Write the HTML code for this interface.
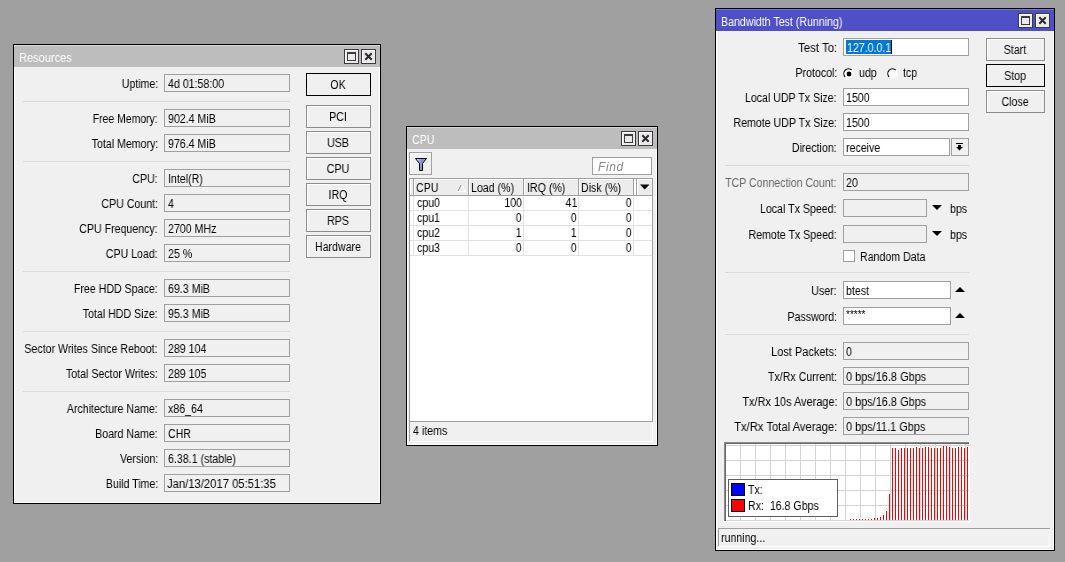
<!DOCTYPE html>
<html><head><meta charset="utf-8"><style>
html,body{margin:0;padding:0}
body{width:1065px;height:562px;overflow:hidden;position:relative;background:#a0a0a0;font-family:"Liberation Sans", sans-serif;font-size:12px}
body div, body svg{position:absolute}
.t{white-space:nowrap;line-height:14px;will-change:transform}
.tc{text-align:center}
</style></head><body>
<div style="left:13px;top:44px;width:368px;height:460px;background:#000"></div>
<div style="left:14px;top:45px;width:366px;height:458px;background:#f0f0f0"></div>
<div style="left:14px;top:45px;width:366px;height:22px;background:#bdbdbd"></div>
<div style="left:14px;top:45px;width:366px;height:1px;background:#d8d8d8"></div>
<div style="left:14px;top:67px;width:1px;height:436px;background:#fff"></div>
<div style="left:379px;top:67px;width:1px;height:436px;background:#fff"></div>
<div style="left:14px;top:502px;width:366px;height:1px;background:#fff"></div>
<div class="t" style="left:19px;top:51px;color:#fff;font-size:12px;transform:scaleX(0.92);transform-origin:0 0;">Resources</div>
<div style="left:344px;top:49px;width:15px;height:15px;background:#3c3c3c"></div>
<div style="left:345px;top:50px;width:13px;height:13px;background:#fff"></div>
<div style="left:346px;top:51px;width:12px;height:12px;background:#ece9ec"></div>
<div style="left:347px;top:52px;width:9px;height:9px;background:#3c3c3c"></div>
<div style="left:348px;top:54px;width:7px;height:6px;background:#ece9ec"></div>
<div style="left:361px;top:49px;width:15px;height:15px;background:#3c3c3c"></div>
<div style="left:362px;top:50px;width:13px;height:13px;background:#fff"></div>
<div style="left:363px;top:51px;width:12px;height:12px;background:#ece9ec"></div>
<svg style="left:361px;top:49px" width="15" height="15"><path d="M5 5L10 10M10 5L5 10" stroke="#2a2a2a" stroke-width="2" stroke-linecap="square"/></svg>
<div class="t" style="right:907px;top:77px;color:#000;font-size:12px;transform:scaleX(0.885);transform-origin:100% 0;">Uptime:</div>
<div style="left:164px;top:74px;width:126px;height:18px;background:#a0a0a0"></div>
<div style="left:165px;top:75px;width:124px;height:16px;background:#f0f0f0"></div>
<div class="t" style="left:168px;top:77px;color:#000;font-size:12px;transform:scaleX(0.885);transform-origin:0 0;">4d 01:58:00</div>
<div style="left:23px;top:101px;width:267px;height:1px;background:#dcdcdc"></div>
<div class="t" style="right:907px;top:112px;color:#000;font-size:12px;transform:scaleX(0.87);transform-origin:100% 0;">Free Memory:</div>
<div style="left:164px;top:109px;width:126px;height:18px;background:#a0a0a0"></div>
<div style="left:165px;top:110px;width:124px;height:16px;background:#f0f0f0"></div>
<div class="t" style="left:168px;top:112px;color:#000;font-size:12px;transform:scaleX(0.885);transform-origin:0 0;">902.4 MiB</div>
<div class="t" style="right:907px;top:137px;color:#000;font-size:12px;transform:scaleX(0.885);transform-origin:100% 0;">Total Memory:</div>
<div style="left:164px;top:134px;width:126px;height:18px;background:#a0a0a0"></div>
<div style="left:165px;top:135px;width:124px;height:16px;background:#f0f0f0"></div>
<div class="t" style="left:168px;top:137px;color:#000;font-size:12px;transform:scaleX(0.885);transform-origin:0 0;">976.4 MiB</div>
<div style="left:23px;top:161px;width:267px;height:1px;background:#dcdcdc"></div>
<div class="t" style="right:907px;top:172px;color:#000;font-size:12px;transform:scaleX(0.885);transform-origin:100% 0;">CPU:</div>
<div style="left:164px;top:169px;width:126px;height:18px;background:#a0a0a0"></div>
<div style="left:165px;top:170px;width:124px;height:16px;background:#f0f0f0"></div>
<div class="t" style="left:168px;top:172px;color:#000;font-size:12px;transform:scaleX(0.885);transform-origin:0 0;">Intel(R)</div>
<div class="t" style="right:907px;top:197px;color:#000;font-size:12px;transform:scaleX(0.885);transform-origin:100% 0;">CPU Count:</div>
<div style="left:164px;top:194px;width:126px;height:18px;background:#a0a0a0"></div>
<div style="left:165px;top:195px;width:124px;height:16px;background:#f0f0f0"></div>
<div class="t" style="left:168px;top:197px;color:#000;font-size:12px;transform:scaleX(0.885);transform-origin:0 0;">4</div>
<div class="t" style="right:907px;top:222px;color:#000;font-size:12px;transform:scaleX(0.885);transform-origin:100% 0;">CPU Frequency:</div>
<div style="left:164px;top:219px;width:126px;height:18px;background:#a0a0a0"></div>
<div style="left:165px;top:220px;width:124px;height:16px;background:#f0f0f0"></div>
<div class="t" style="left:168px;top:222px;color:#000;font-size:12px;transform:scaleX(0.885);transform-origin:0 0;">2700 MHz</div>
<div class="t" style="right:907px;top:247px;color:#000;font-size:12px;transform:scaleX(0.885);transform-origin:100% 0;">CPU Load:</div>
<div style="left:164px;top:244px;width:126px;height:18px;background:#a0a0a0"></div>
<div style="left:165px;top:245px;width:124px;height:16px;background:#f0f0f0"></div>
<div class="t" style="left:168px;top:247px;color:#000;font-size:12px;transform:scaleX(0.885);transform-origin:0 0;">25 %</div>
<div style="left:23px;top:271px;width:267px;height:1px;background:#dcdcdc"></div>
<div class="t" style="right:907px;top:282px;color:#000;font-size:12px;transform:scaleX(0.885);transform-origin:100% 0;">Free HDD Space:</div>
<div style="left:164px;top:279px;width:126px;height:18px;background:#a0a0a0"></div>
<div style="left:165px;top:280px;width:124px;height:16px;background:#f0f0f0"></div>
<div class="t" style="left:168px;top:282px;color:#000;font-size:12px;transform:scaleX(0.885);transform-origin:0 0;">69.3 MiB</div>
<div class="t" style="right:907px;top:307px;color:#000;font-size:12px;transform:scaleX(0.885);transform-origin:100% 0;">Total HDD Size:</div>
<div style="left:164px;top:304px;width:126px;height:18px;background:#a0a0a0"></div>
<div style="left:165px;top:305px;width:124px;height:16px;background:#f0f0f0"></div>
<div class="t" style="left:168px;top:307px;color:#000;font-size:12px;transform:scaleX(0.885);transform-origin:0 0;">95.3 MiB</div>
<div style="left:23px;top:331px;width:267px;height:1px;background:#dcdcdc"></div>
<div class="t" style="right:907px;top:342px;color:#000;font-size:12px;transform:scaleX(0.885);transform-origin:100% 0;">Sector Writes Since Reboot:</div>
<div style="left:164px;top:339px;width:126px;height:18px;background:#a0a0a0"></div>
<div style="left:165px;top:340px;width:124px;height:16px;background:#f0f0f0"></div>
<div class="t" style="left:168px;top:342px;color:#000;font-size:12px;transform:scaleX(0.885);transform-origin:0 0;">289 104</div>
<div class="t" style="right:907px;top:367px;color:#000;font-size:12px;transform:scaleX(0.885);transform-origin:100% 0;">Total Sector Writes:</div>
<div style="left:164px;top:364px;width:126px;height:18px;background:#a0a0a0"></div>
<div style="left:165px;top:365px;width:124px;height:16px;background:#f0f0f0"></div>
<div class="t" style="left:168px;top:367px;color:#000;font-size:12px;transform:scaleX(0.885);transform-origin:0 0;">289 105</div>
<div style="left:23px;top:391px;width:267px;height:1px;background:#dcdcdc"></div>
<div class="t" style="right:907px;top:402px;color:#000;font-size:12px;transform:scaleX(0.885);transform-origin:100% 0;">Architecture Name:</div>
<div style="left:164px;top:399px;width:126px;height:18px;background:#a0a0a0"></div>
<div style="left:165px;top:400px;width:124px;height:16px;background:#f0f0f0"></div>
<div class="t" style="left:168px;top:402px;color:#000;font-size:12px;transform:scaleX(0.885);transform-origin:0 0;">x86_64</div>
<div class="t" style="right:907px;top:427px;color:#000;font-size:12px;transform:scaleX(0.885);transform-origin:100% 0;">Board Name:</div>
<div style="left:164px;top:424px;width:126px;height:18px;background:#a0a0a0"></div>
<div style="left:165px;top:425px;width:124px;height:16px;background:#f0f0f0"></div>
<div class="t" style="left:168px;top:427px;color:#000;font-size:12px;transform:scaleX(0.885);transform-origin:0 0;">CHR</div>
<div class="t" style="right:907px;top:452px;color:#000;font-size:12px;transform:scaleX(0.885);transform-origin:100% 0;">Version:</div>
<div style="left:164px;top:449px;width:126px;height:18px;background:#a0a0a0"></div>
<div style="left:165px;top:450px;width:124px;height:16px;background:#f0f0f0"></div>
<div class="t" style="left:168px;top:452px;color:#000;font-size:12px;transform:scaleX(0.885);transform-origin:0 0;">6.38.1 (stable)</div>
<div class="t" style="right:907px;top:477px;color:#000;font-size:12px;transform:scaleX(0.885);transform-origin:100% 0;">Build Time:</div>
<div style="left:164px;top:474px;width:126px;height:18px;background:#a0a0a0"></div>
<div style="left:165px;top:475px;width:124px;height:16px;background:#f0f0f0"></div>
<div class="t" style="left:167px;top:477px;color:#000;font-size:12px;transform:scaleX(0.937);transform-origin:0 0;">Jan/13/2017 05:51:35</div>
<div style="left:306px;top:73px;width:65px;height:23px;background:#000"></div>
<div style="left:307px;top:74px;width:63px;height:21px;background:#f0f0f0"></div>
<div class="t tc" style="left:238px;width:200px;top:78px;color:#000;font-size:12px;transform:scaleX(0.885);transform-origin:50% 0;">OK</div>
<div style="left:306px;top:105px;width:65px;height:23px;background:#8c8c8c"></div>
<div style="left:307px;top:106px;width:63px;height:21px;background:#fff"></div>
<div style="left:308px;top:107px;width:62px;height:20px;background:#f0f0f0"></div>
<div class="t tc" style="left:238px;width:200px;top:110px;color:#000;font-size:12px;transform:scaleX(0.885);transform-origin:50% 0;">PCI</div>
<div style="left:306px;top:131px;width:65px;height:23px;background:#8c8c8c"></div>
<div style="left:307px;top:132px;width:63px;height:21px;background:#fff"></div>
<div style="left:308px;top:133px;width:62px;height:20px;background:#f0f0f0"></div>
<div class="t tc" style="left:238px;width:200px;top:136px;color:#000;font-size:12px;transform:scaleX(0.885);transform-origin:50% 0;">USB</div>
<div style="left:306px;top:157px;width:65px;height:23px;background:#8c8c8c"></div>
<div style="left:307px;top:158px;width:63px;height:21px;background:#fff"></div>
<div style="left:308px;top:159px;width:62px;height:20px;background:#f0f0f0"></div>
<div class="t tc" style="left:238px;width:200px;top:162px;color:#000;font-size:12px;transform:scaleX(0.885);transform-origin:50% 0;">CPU</div>
<div style="left:306px;top:183px;width:65px;height:23px;background:#8c8c8c"></div>
<div style="left:307px;top:184px;width:63px;height:21px;background:#fff"></div>
<div style="left:308px;top:185px;width:62px;height:20px;background:#f0f0f0"></div>
<div class="t tc" style="left:238px;width:200px;top:188px;color:#000;font-size:12px;transform:scaleX(0.885);transform-origin:50% 0;">IRQ</div>
<div style="left:306px;top:209px;width:65px;height:23px;background:#8c8c8c"></div>
<div style="left:307px;top:210px;width:63px;height:21px;background:#fff"></div>
<div style="left:308px;top:211px;width:62px;height:20px;background:#f0f0f0"></div>
<div class="t tc" style="left:238px;width:200px;top:214px;color:#000;font-size:12px;transform:scaleX(0.885);transform-origin:50% 0;">RPS</div>
<div style="left:306px;top:235px;width:65px;height:23px;background:#8c8c8c"></div>
<div style="left:307px;top:236px;width:63px;height:21px;background:#fff"></div>
<div style="left:308px;top:237px;width:62px;height:20px;background:#f0f0f0"></div>
<div class="t tc" style="left:238px;width:200px;top:240px;color:#000;font-size:12px;transform:scaleX(0.885);transform-origin:50% 0;">Hardware</div>
<div style="left:406px;top:126px;width:252px;height:320px;background:#000"></div>
<div style="left:407px;top:127px;width:250px;height:318px;background:#f0f0f0"></div>
<div style="left:407px;top:127px;width:250px;height:22px;background:#bdbdbd"></div>
<div style="left:407px;top:127px;width:250px;height:1px;background:#d8d8d8"></div>
<div style="left:407px;top:149px;width:1px;height:296px;background:#fff"></div>
<div style="left:656px;top:149px;width:1px;height:296px;background:#fff"></div>
<div style="left:407px;top:444px;width:250px;height:1px;background:#fff"></div>
<div class="t" style="left:412px;top:133px;color:#fff;font-size:12px;transform:scaleX(0.885);transform-origin:0 0;">CPU</div>
<div style="left:621px;top:131px;width:15px;height:15px;background:#3c3c3c"></div>
<div style="left:622px;top:132px;width:13px;height:13px;background:#fff"></div>
<div style="left:623px;top:133px;width:12px;height:12px;background:#ece9ec"></div>
<div style="left:624px;top:134px;width:9px;height:9px;background:#3c3c3c"></div>
<div style="left:625px;top:136px;width:7px;height:6px;background:#ece9ec"></div>
<div style="left:638px;top:131px;width:15px;height:15px;background:#3c3c3c"></div>
<div style="left:639px;top:132px;width:13px;height:13px;background:#fff"></div>
<div style="left:640px;top:133px;width:12px;height:12px;background:#ece9ec"></div>
<svg style="left:638px;top:131px" width="15" height="15"><path d="M5 5L10 10M10 5L5 10" stroke="#2a2a2a" stroke-width="2" stroke-linecap="square"/></svg>
<div style="left:409px;top:152px;width:23px;height:23px;background:#a0a0a0"></div>
<div style="left:410px;top:153px;width:21px;height:21px;background:#fff"></div>
<div style="left:411px;top:154px;width:20px;height:20px;background:#f0f0f0"></div>
<svg style="left:409px;top:152px" width="23" height="23"><defs><linearGradient id="fg" x1="0" x2="1"><stop offset="0" stop-color="#e4e8fa"/><stop offset="0.55" stop-color="#7d8cd4"/><stop offset="1" stop-color="#a9b4e6"/></linearGradient></defs><path d="M6.5 6.5H17.5L13.5 11.5V18.5H10.5V11.5Z" fill="url(#fg)" stroke="#000" stroke-width="1" stroke-linejoin="miter"/></svg>
<div style="left:592px;top:157px;width:60px;height:18px;background:#a0a0a0"></div>
<div style="left:593px;top:158px;width:58px;height:16px;background:#fff"></div>
<div class="t" style="left:598px;top:160px;color:#8a8a8a;font-size:12px;transform:scaleX(1.0);transform-origin:0 0;font-style:italic;letter-spacing:0.6px">Find</div>
<div style="left:409px;top:178px;width:244px;height:244px;background:#a0a0a0"></div>
<div style="left:410px;top:179px;width:242px;height:242px;background:#fff"></div>
<div style="left:410px;top:180px;width:242px;height:15px;background:#ececec"></div>
<div style="left:410px;top:195px;width:242px;height:1px;background:#a0a0a0"></div>
<div style="left:413px;top:179px;width:1px;height:16px;background:#a0a0a0"></div>
<div style="left:414px;top:179px;width:1px;height:16px;background:#fff"></div>
<div style="left:468px;top:179px;width:1px;height:16px;background:#a0a0a0"></div>
<div style="left:469px;top:179px;width:1px;height:16px;background:#fff"></div>
<div style="left:523px;top:179px;width:1px;height:16px;background:#a0a0a0"></div>
<div style="left:524px;top:179px;width:1px;height:16px;background:#fff"></div>
<div style="left:578px;top:179px;width:1px;height:16px;background:#a0a0a0"></div>
<div style="left:579px;top:179px;width:1px;height:16px;background:#fff"></div>
<div style="left:633px;top:179px;width:1px;height:16px;background:#a0a0a0"></div>
<div style="left:634px;top:179px;width:1px;height:16px;background:#fff"></div>
<div style="left:636px;top:179px;width:1px;height:16px;background:#a0a0a0"></div>
<div style="left:637px;top:179px;width:1px;height:16px;background:#fff"></div>
<div style="left:410px;top:179px;width:1px;height:16px;background:#fff"></div>
<div style="left:634px;top:179px;width:2px;height:16px;background:#fff"></div>
<div class="t" style="left:416px;top:181px;color:#000;font-size:12px;transform:scaleX(0.885);transform-origin:0 0;">CPU</div>
<div class="t" style="left:471px;top:181px;color:#000;font-size:12px;transform:scaleX(0.885);transform-origin:0 0;">Load (%)</div>
<div class="t" style="left:527px;top:181px;color:#000;font-size:12px;transform:scaleX(0.885);transform-origin:0 0;">IRQ (%)</div>
<div class="t" style="left:581px;top:181px;color:#000;font-size:12px;transform:scaleX(0.885);transform-origin:0 0;">Disk (%)</div>
<svg style="left:457px;top:184px" width="10" height="8"><path d="M4.5 0.5L1 7" stroke="#8a8a8a" fill="none"/><path d="M4.5 0.5L8.5 7.5H1" stroke="#fff" fill="none"/></svg>
<svg style="left:637px;top:183px" width="16" height="10"><path d="M3 1.5H12.5L7.75 6.5Z" fill="#000"/></svg>
<div style="left:410px;top:210px;width:242px;height:1px;background:#e2e2e2"></div>
<div class="t" style="left:417px;top:196px;color:#000;font-size:12px;transform:scaleX(0.885);transform-origin:0 0;">cpu0</div>
<div class="t" style="right:543px;top:196px;color:#000;font-size:12px;transform:scaleX(0.885);transform-origin:100% 0;">100</div>
<div class="t" style="right:488px;top:196px;color:#000;font-size:12px;transform:scaleX(0.885);transform-origin:100% 0;">41</div>
<div class="t" style="right:433px;top:196px;color:#000;font-size:12px;transform:scaleX(0.885);transform-origin:100% 0;">0</div>
<div style="left:410px;top:225px;width:242px;height:1px;background:#e2e2e2"></div>
<div class="t" style="left:417px;top:211px;color:#000;font-size:12px;transform:scaleX(0.885);transform-origin:0 0;">cpu1</div>
<div class="t" style="right:543px;top:211px;color:#000;font-size:12px;transform:scaleX(0.885);transform-origin:100% 0;">0</div>
<div class="t" style="right:488px;top:211px;color:#000;font-size:12px;transform:scaleX(0.885);transform-origin:100% 0;">0</div>
<div class="t" style="right:433px;top:211px;color:#000;font-size:12px;transform:scaleX(0.885);transform-origin:100% 0;">0</div>
<div style="left:410px;top:240px;width:242px;height:1px;background:#e2e2e2"></div>
<div class="t" style="left:417px;top:226px;color:#000;font-size:12px;transform:scaleX(0.885);transform-origin:0 0;">cpu2</div>
<div class="t" style="right:543px;top:226px;color:#000;font-size:12px;transform:scaleX(0.885);transform-origin:100% 0;">1</div>
<div class="t" style="right:488px;top:226px;color:#000;font-size:12px;transform:scaleX(0.885);transform-origin:100% 0;">1</div>
<div class="t" style="right:433px;top:226px;color:#000;font-size:12px;transform:scaleX(0.885);transform-origin:100% 0;">0</div>
<div style="left:410px;top:255px;width:242px;height:1px;background:#e2e2e2"></div>
<div class="t" style="left:417px;top:241px;color:#000;font-size:12px;transform:scaleX(0.885);transform-origin:0 0;">cpu3</div>
<div class="t" style="right:543px;top:241px;color:#000;font-size:12px;transform:scaleX(0.885);transform-origin:100% 0;">0</div>
<div class="t" style="right:488px;top:241px;color:#000;font-size:12px;transform:scaleX(0.885);transform-origin:100% 0;">0</div>
<div class="t" style="right:433px;top:241px;color:#000;font-size:12px;transform:scaleX(0.885);transform-origin:100% 0;">0</div>
<div style="left:413px;top:196px;width:1px;height:60px;background:#e2e2e2"></div>
<div style="left:468px;top:196px;width:1px;height:60px;background:#e2e2e2"></div>
<div style="left:523px;top:196px;width:1px;height:60px;background:#e2e2e2"></div>
<div style="left:578px;top:196px;width:1px;height:60px;background:#e2e2e2"></div>
<div style="left:633px;top:196px;width:1px;height:60px;background:#e2e2e2"></div>
<div style="left:409px;top:422px;width:1px;height:19px;background:#a0a0a0"></div>
<div style="left:409px;top:441px;width:244px;height:1px;background:#fff"></div>
<div style="left:652px;top:422px;width:1px;height:19px;background:#fff"></div>
<div class="t" style="left:413px;top:424px;color:#000;font-size:12px;transform:scaleX(0.885);transform-origin:0 0;">4 items</div>
<div style="left:715px;top:8px;width:340px;height:543px;background:#000"></div>
<div style="left:716px;top:9px;width:338px;height:541px;background:#f0f0f0"></div>
<div style="left:716px;top:9px;width:338px;height:22px;background:#4f4fc8"></div>
<div style="left:716px;top:9px;width:338px;height:1px;background:#7a7ad8"></div>
<div style="left:716px;top:31px;width:1px;height:519px;background:#fff"></div>
<div style="left:1053px;top:31px;width:1px;height:519px;background:#fff"></div>
<div style="left:716px;top:549px;width:338px;height:1px;background:#fff"></div>
<div class="t" style="left:721px;top:15px;color:#fff;font-size:12px;transform:scaleX(0.885);transform-origin:0 0;">Bandwidth Test (Running)</div>
<div style="left:1018px;top:13px;width:15px;height:15px;background:#3c3c3c"></div>
<div style="left:1019px;top:14px;width:13px;height:13px;background:#fff"></div>
<div style="left:1020px;top:15px;width:12px;height:12px;background:#ece9ec"></div>
<div style="left:1021px;top:16px;width:9px;height:9px;background:#3c3c3c"></div>
<div style="left:1022px;top:18px;width:7px;height:6px;background:#ece9ec"></div>
<div style="left:1035px;top:13px;width:15px;height:15px;background:#3c3c3c"></div>
<div style="left:1036px;top:14px;width:13px;height:13px;background:#fff"></div>
<div style="left:1037px;top:15px;width:12px;height:12px;background:#ece9ec"></div>
<svg style="left:1035px;top:13px" width="15" height="15"><path d="M5 5L10 10M10 5L5 10" stroke="#2a2a2a" stroke-width="2" stroke-linecap="square"/></svg>
<div class="t" style="right:228px;top:41px;color:#000;font-size:12px;transform:scaleX(0.95);transform-origin:100% 0;">Test To:</div>
<div style="left:843px;top:38px;width:126px;height:18px;background:#a0a0a0"></div>
<div style="left:844px;top:39px;width:124px;height:16px;background:#fff"></div>
<div style="left:846px;top:40px;width:46px;height:14px;background:#0078d7"></div>
<div class="t" style="left:847px;top:41px;color:#fff;font-size:12px;transform:scaleX(0.885);transform-origin:0 0;">127.0.0.1</div>
<div style="left:891px;top:40px;width:1px;height:14px;background:#000"></div>
<div class="t" style="right:228px;top:66px;color:#000;font-size:12px;transform:scaleX(0.885);transform-origin:100% 0;">Protocol:</div>
<svg style="left:843px;top:67px" width="13" height="13"><circle cx="5.5" cy="6.5" r="4.6" fill="#fff"/><path d="M8.8 3.2A4.6 4.6 0 0 0 2.2 9.8" fill="none" stroke="#000" stroke-width="1.1"/><path d="M8.8 3.2A4.6 4.6 0 0 1 2.2 9.8" fill="none" stroke="#fff" stroke-width="1.1"/></svg>
<div class="t" style="left:859px;top:66px;color:#000;font-size:12px;transform:scaleX(0.885);transform-origin:0 0;">udp</div>
<svg style="left:887px;top:67px" width="13" height="13"><circle cx="5.5" cy="6.5" r="4.6" fill="#fff"/><path d="M8.8 3.2A4.6 4.6 0 0 0 2.2 9.8" fill="none" stroke="#000" stroke-width="1.1"/><path d="M8.8 3.2A4.6 4.6 0 0 1 2.2 9.8" fill="none" stroke="#fff" stroke-width="1.1"/></svg>
<div class="t" style="left:903px;top:66px;color:#000;font-size:12px;transform:scaleX(0.885);transform-origin:0 0;">tcp</div>
<div style="left:847px;top:72px;width:4px;height:4px;border-radius:50%;background:#000;box-shadow:0 0 0 0.4px #000"></div>
<div class="t" style="right:228px;top:91px;color:#000;font-size:12px;transform:scaleX(0.885);transform-origin:100% 0;">Local UDP Tx Size:</div>
<div style="left:843px;top:88px;width:126px;height:18px;background:#a0a0a0"></div>
<div style="left:844px;top:89px;width:124px;height:16px;background:#fff"></div>
<div class="t" style="left:846px;top:91px;color:#000;font-size:12px;transform:scaleX(0.885);transform-origin:0 0;">1500</div>
<div class="t" style="right:228px;top:116px;color:#000;font-size:12px;transform:scaleX(0.885);transform-origin:100% 0;">Remote UDP Tx Size:</div>
<div style="left:843px;top:113px;width:126px;height:18px;background:#a0a0a0"></div>
<div style="left:844px;top:114px;width:124px;height:16px;background:#fff"></div>
<div class="t" style="left:846px;top:116px;color:#000;font-size:12px;transform:scaleX(0.885);transform-origin:0 0;">1500</div>
<div class="t" style="right:228px;top:141px;color:#000;font-size:12px;transform:scaleX(0.885);transform-origin:100% 0;">Direction:</div>
<div style="left:843px;top:138px;width:107px;height:18px;background:#a0a0a0"></div>
<div style="left:844px;top:139px;width:105px;height:16px;background:#fff"></div>
<div class="t" style="left:846px;top:141px;color:#000;font-size:12px;transform:scaleX(0.885);transform-origin:0 0;">receive</div>
<div style="left:951px;top:138px;width:18px;height:18px;background:#a0a0a0"></div>
<div style="left:952px;top:139px;width:16px;height:16px;background:#f0f0f0"></div>
<svg style="left:951px;top:138px" width="18" height="18"><rect x="5" y="5" width="7" height="1" fill="#000"/><rect x="7" y="7" width="3" height="2.5" fill="#000"/><path d="M5 9H12L8.5 12.5Z" fill="#000"/></svg>
<div style="left:725px;top:165px;width:244px;height:1px;background:#dcdcdc"></div>
<div class="t" style="right:228px;top:176px;color:#666666;font-size:12px;transform:scaleX(0.88);transform-origin:100% 0;">TCP Connection Count:</div>
<div style="left:843px;top:173px;width:126px;height:18px;background:#a0a0a0"></div>
<div style="left:844px;top:174px;width:124px;height:16px;background:#f0f0f0"></div>
<div class="t" style="left:846px;top:176px;color:#000;font-size:12px;transform:scaleX(0.885);transform-origin:0 0;">20</div>
<div class="t" style="right:228px;top:202px;color:#000;font-size:12px;transform:scaleX(0.885);transform-origin:100% 0;">Local Tx Speed:</div>
<div style="left:843px;top:199px;width:84px;height:18px;background:#a0a0a0"></div>
<div style="left:844px;top:200px;width:82px;height:16px;background:#f0f0f0"></div>
<svg style="left:931px;top:204px" width="12" height="8"><path d="M1 1H11L6 6Z" fill="#000"/></svg>
<div class="t" style="left:950px;top:202px;color:#000;font-size:12px;transform:scaleX(0.885);transform-origin:0 0;">bps</div>
<div class="t" style="right:228px;top:228px;color:#000;font-size:12px;transform:scaleX(0.885);transform-origin:100% 0;">Remote Tx Speed:</div>
<div style="left:843px;top:225px;width:84px;height:18px;background:#a0a0a0"></div>
<div style="left:844px;top:226px;width:82px;height:16px;background:#f0f0f0"></div>
<svg style="left:931px;top:230px" width="12" height="8"><path d="M1 1H11L6 6Z" fill="#000"/></svg>
<div class="t" style="left:950px;top:228px;color:#000;font-size:12px;transform:scaleX(0.885);transform-origin:0 0;">bps</div>
<div style="left:843px;top:250px;width:12px;height:12px;background:#a0a0a0"></div>
<div style="left:844px;top:251px;width:10px;height:10px;background:#fff"></div>
<div class="t" style="left:860px;top:250px;color:#000;font-size:12px;transform:scaleX(0.885);transform-origin:0 0;">Random Data</div>
<div style="left:725px;top:272px;width:244px;height:1px;background:#dcdcdc"></div>
<div class="t" style="right:228px;top:284px;color:#000;font-size:12px;transform:scaleX(0.885);transform-origin:100% 0;">User:</div>
<div style="left:843px;top:281px;width:108px;height:18px;background:#a0a0a0"></div>
<div style="left:844px;top:282px;width:106px;height:16px;background:#fff"></div>
<div class="t" style="left:846px;top:284px;color:#000;font-size:12px;transform:scaleX(0.885);transform-origin:0 0;">btest</div>
<svg style="left:954px;top:286px" width="12" height="8"><path d="M1 6H11L6 1Z" fill="#000"/></svg>
<div class="t" style="right:228px;top:310px;color:#000;font-size:12px;transform:scaleX(0.885);transform-origin:100% 0;">Password:</div>
<div style="left:843px;top:307px;width:108px;height:18px;background:#a0a0a0"></div>
<div style="left:844px;top:308px;width:106px;height:16px;background:#fff"></div>
<div class="t" style="left:846px;top:308px;color:#000;font-size:10px;transform:scaleX(1.0);transform-origin:0 0;">*****</div>
<svg style="left:954px;top:312px" width="12" height="8"><path d="M1 6H11L6 1Z" fill="#000"/></svg>
<div style="left:725px;top:334px;width:244px;height:1px;background:#dcdcdc"></div>
<div class="t" style="right:228px;top:345px;color:#000;font-size:12px;transform:scaleX(0.915);transform-origin:100% 0;">Lost Packets:</div>
<div style="left:843px;top:342px;width:126px;height:18px;background:#a0a0a0"></div>
<div style="left:844px;top:343px;width:124px;height:16px;background:#f0f0f0"></div>
<div class="t" style="left:846px;top:345px;color:#000;font-size:12px;transform:scaleX(0.885);transform-origin:0 0;">0</div>
<div class="t" style="right:228px;top:370px;color:#000;font-size:12px;transform:scaleX(0.885);transform-origin:100% 0;">Tx/Rx Current:</div>
<div style="left:843px;top:367px;width:126px;height:18px;background:#a0a0a0"></div>
<div style="left:844px;top:368px;width:124px;height:16px;background:#f0f0f0"></div>
<div class="t" style="left:846px;top:370px;color:#000;font-size:12px;transform:scaleX(0.91);transform-origin:0 0;">0 bps/16.8 Gbps</div>
<div class="t" style="right:228px;top:395px;color:#000;font-size:12px;transform:scaleX(0.91);transform-origin:100% 0;">Tx/Rx 10s Average:</div>
<div style="left:843px;top:392px;width:126px;height:18px;background:#a0a0a0"></div>
<div style="left:844px;top:393px;width:124px;height:16px;background:#f0f0f0"></div>
<div class="t" style="left:846px;top:395px;color:#000;font-size:12px;transform:scaleX(0.91);transform-origin:0 0;">0 bps/16.8 Gbps</div>
<div class="t" style="right:228px;top:420px;color:#000;font-size:12px;transform:scaleX(0.935);transform-origin:100% 0;">Tx/Rx Total Average:</div>
<div style="left:843px;top:417px;width:126px;height:18px;background:#a0a0a0"></div>
<div style="left:844px;top:418px;width:124px;height:16px;background:#f0f0f0"></div>
<div class="t" style="left:846px;top:420px;color:#000;font-size:12px;transform:scaleX(0.91);transform-origin:0 0;">0 bps/11.1 Gbps</div>
<div style="left:724px;top:442px;width:246px;height:80px;background:#fff"></div>
<div style="left:724px;top:442px;width:245px;height:79px;background:#6a6a6a"></div>
<div style="left:724px;top:442px;width:245px;height:1px;background:#8a8a8a"></div>
<div style="left:724px;top:442px;width:1px;height:79px;background:#8a8a8a"></div>
<div style="left:726px;top:444px;width:243px;height:77px;background:#fff"></div>
<div style="left:740px;top:444px;width:1px;height:77px;background:#d4d4d4"></div><div style="left:755px;top:444px;width:1px;height:77px;background:#d4d4d4"></div><div style="left:770px;top:444px;width:1px;height:77px;background:#d4d4d4"></div><div style="left:785px;top:444px;width:1px;height:77px;background:#d4d4d4"></div><div style="left:800px;top:444px;width:1px;height:77px;background:#d4d4d4"></div><div style="left:815px;top:444px;width:1px;height:77px;background:#d4d4d4"></div><div style="left:830px;top:444px;width:1px;height:77px;background:#d4d4d4"></div><div style="left:845px;top:444px;width:1px;height:77px;background:#d4d4d4"></div><div style="left:860px;top:444px;width:1px;height:77px;background:#d4d4d4"></div><div style="left:875px;top:444px;width:1px;height:77px;background:#d4d4d4"></div><div style="left:890px;top:444px;width:1px;height:77px;background:#d4d4d4"></div><div style="left:905px;top:444px;width:1px;height:77px;background:#d4d4d4"></div><div style="left:920px;top:444px;width:1px;height:77px;background:#d4d4d4"></div><div style="left:935px;top:444px;width:1px;height:77px;background:#d4d4d4"></div><div style="left:950px;top:444px;width:1px;height:77px;background:#d4d4d4"></div><div style="left:965px;top:444px;width:1px;height:77px;background:#d4d4d4"></div><div style="left:726px;top:445px;width:243px;height:1px;background:#d4d4d4"></div><div style="left:726px;top:460px;width:243px;height:1px;background:#d4d4d4"></div><div style="left:726px;top:475px;width:243px;height:1px;background:#d4d4d4"></div><div style="left:726px;top:490px;width:243px;height:1px;background:#d4d4d4"></div><div style="left:726px;top:505px;width:243px;height:1px;background:#d4d4d4"></div><div style="left:726px;top:520px;width:243px;height:1px;background:#d4d4d4"></div>
<div style="left:850px;top:519px;width:1px;height:1px;background:#f00"></div><div style="left:853px;top:519px;width:1px;height:1px;background:#f00"></div><div style="left:856px;top:519px;width:1px;height:1px;background:#f00"></div><div style="left:859px;top:519px;width:1px;height:1px;background:#f00"></div><div style="left:862px;top:519px;width:1px;height:1px;background:#f00"></div><div style="left:865px;top:519px;width:1px;height:1px;background:#f00"></div><div style="left:868px;top:519px;width:1px;height:1px;background:#f00"></div><div style="left:871px;top:519px;width:1px;height:1px;background:#f00"></div><div style="left:874px;top:518px;width:1px;height:2px;background:#f00"></div><div style="left:877px;top:518px;width:1px;height:2px;background:#f00"></div><div style="left:880px;top:517px;width:1px;height:3px;background:#f00"></div><div style="left:883px;top:515px;width:1px;height:5px;background:#f00"></div><div style="left:886px;top:511px;width:1px;height:9px;background:#f00"></div><div style="left:889px;top:494px;width:1px;height:26px;background:#f00"></div><div style="left:892px;top:448px;width:1px;height:72px;background:#f00"></div><div style="left:895px;top:448px;width:1px;height:72px;background:#f00"></div><div style="left:898px;top:450px;width:1px;height:70px;background:#f00"></div><div style="left:901px;top:448px;width:1px;height:72px;background:#f00"></div><div style="left:904px;top:448px;width:1px;height:72px;background:#f00"></div><div style="left:907px;top:448px;width:1px;height:72px;background:#f00"></div><div style="left:910px;top:448px;width:1px;height:72px;background:#f00"></div><div style="left:913px;top:448px;width:1px;height:72px;background:#f00"></div><div style="left:916px;top:447px;width:1px;height:73px;background:#f00"></div><div style="left:919px;top:448px;width:1px;height:72px;background:#f00"></div><div style="left:922px;top:448px;width:1px;height:72px;background:#f00"></div><div style="left:925px;top:447px;width:1px;height:73px;background:#f00"></div><div style="left:928px;top:447px;width:1px;height:73px;background:#f00"></div><div style="left:931px;top:448px;width:1px;height:72px;background:#f00"></div><div style="left:934px;top:448px;width:1px;height:72px;background:#f00"></div><div style="left:937px;top:448px;width:1px;height:72px;background:#f00"></div><div style="left:940px;top:448px;width:1px;height:72px;background:#f00"></div><div style="left:943px;top:446px;width:1px;height:74px;background:#f00"></div><div style="left:946px;top:446px;width:1px;height:74px;background:#f00"></div><div style="left:949px;top:447px;width:1px;height:73px;background:#f00"></div><div style="left:952px;top:448px;width:1px;height:72px;background:#f00"></div><div style="left:955px;top:448px;width:1px;height:72px;background:#f00"></div><div style="left:958px;top:447px;width:1px;height:73px;background:#f00"></div><div style="left:961px;top:447px;width:1px;height:73px;background:#f00"></div><div style="left:964px;top:448px;width:1px;height:72px;background:#f00"></div><div style="left:967px;top:447px;width:1px;height:73px;background:#f00"></div>
<div style="left:728px;top:479px;width:110px;height:38px;background:#606060"></div>
<div style="left:729px;top:480px;width:108px;height:36px;background:#fff"></div>
<div style="left:731px;top:483px;width:14px;height:13px;background:#000"></div>
<div style="left:732px;top:484px;width:12px;height:11px;background:#0000ff"></div>
<div style="left:731px;top:499px;width:14px;height:13px;background:#000"></div>
<div style="left:732px;top:500px;width:12px;height:11px;background:#ff0000"></div>
<div class="t" style="left:748px;top:483px;color:#000;font-size:12px;transform:scaleX(0.885);transform-origin:0 0;">Tx:</div>
<div class="t" style="left:748px;top:499px;color:#000;font-size:12px;transform:scaleX(0.885);transform-origin:0 0;">Rx:&nbsp; 16.8 Gbps</div>
<div style="left:986px;top:38px;width:59px;height:23px;background:#8c8c8c"></div>
<div style="left:987px;top:39px;width:57px;height:21px;background:#fff"></div>
<div style="left:988px;top:40px;width:56px;height:20px;background:#f0f0f0"></div>
<div class="t tc" style="left:915px;width:200px;top:43px;color:#000;font-size:12px;transform:scaleX(0.885);transform-origin:50% 0;">Start</div>
<div style="left:986px;top:64px;width:59px;height:23px;background:#000"></div>
<div style="left:987px;top:65px;width:57px;height:21px;background:#f0f0f0"></div>
<div class="t tc" style="left:915px;width:200px;top:69px;color:#000;font-size:12px;transform:scaleX(0.885);transform-origin:50% 0;">Stop</div>
<div style="left:986px;top:90px;width:59px;height:23px;background:#8c8c8c"></div>
<div style="left:987px;top:91px;width:57px;height:21px;background:#fff"></div>
<div style="left:988px;top:92px;width:56px;height:20px;background:#f0f0f0"></div>
<div class="t tc" style="left:915px;width:200px;top:95px;color:#000;font-size:12px;transform:scaleX(0.885);transform-origin:50% 0;">Close</div>
<div style="left:718px;top:528px;width:332px;height:1px;background:#a0a0a0"></div>
<div style="left:718px;top:528px;width:1px;height:19px;background:#a0a0a0"></div>
<div style="left:718px;top:546px;width:332px;height:1px;background:#fff"></div>
<div style="left:1049px;top:529px;width:1px;height:18px;background:#fff"></div>
<div class="t" style="left:721px;top:531px;color:#000;font-size:12px;transform:scaleX(0.885);transform-origin:0 0;">running...</div>
</body></html>
